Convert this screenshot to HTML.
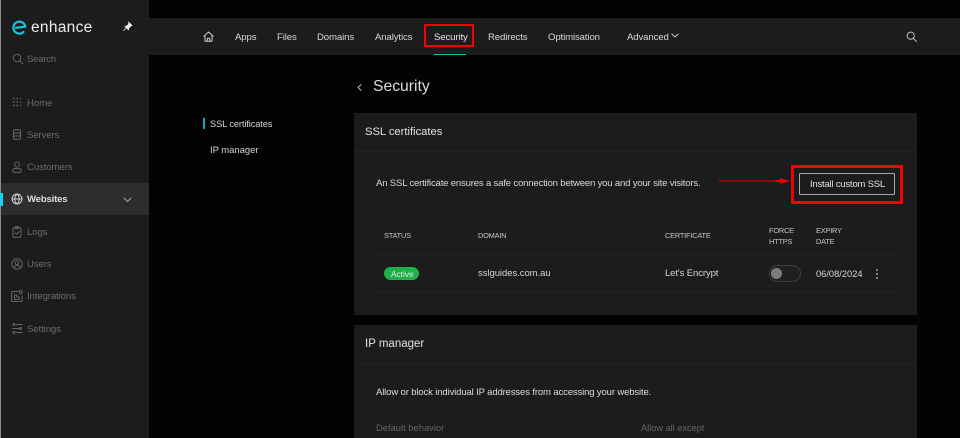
<!DOCTYPE html>
<html><head><meta charset="utf-8"><style>
*{box-sizing:border-box}
html,body{margin:0;padding:0;background:#030303}
body{position:relative;width:960px;height:438px;overflow:hidden;font-family:"Liberation Sans",sans-serif;color:#ddd}
.a{position:absolute}
.t{position:absolute;white-space:nowrap;line-height:14px;height:14px;transform:translateY(-7px)}
.nav{font-size:9.6px;letter-spacing:-.12px;color:#d6d6d6;top:37.5px}
.side{font-size:9.6px;letter-spacing:-.1px;color:#6b6b6b;left:27px}
.h{font-size:7.4px;letter-spacing:-.2px;color:#c4c4c4}
svg{position:absolute;fill:none;stroke-linecap:round;stroke-linejoin:round}
.ic{stroke:#666;stroke-width:1}
</style></head><body>
<div class="a" style="left:0;top:0;width:149px;height:438px;background:#1c1c1c"></div>
<div class="a" style="left:0;top:0;width:1px;height:438px;background:#8a8a8a"></div>
<div class="a" style="left:149px;top:18px;width:811px;height:37px;background:#1c1c1c"></div>

<svg style="left:11px;top:18px" width="16" height="18" viewBox="0 0 16 18" stroke="#16c5e0" stroke-width="2.2"><path d="M12.500 14a6 6 0 1 1 1.800-5.300L5 9.800"/></svg>
<div class="t" style="left:31px;top:27.500px;font-size:15.500px;color:#eee;letter-spacing:.3px">enhance</div>
<svg style="left:122px;top:21px" width="11" height="11" viewBox="0 0 11 11"><path d="M6.500 1l3.500 3.500-1.200.5-2 2-.3 1.800L3 5.300l1.800-.3 2-2zM4.500 6.500L1.500 9.500" style="fill:#eee" stroke="#eee" stroke-width=".8"/></svg>

<svg class="ic" style="left:12px;top:53px" width="12" height="12" viewBox="0 0 12 12"><circle cx="5" cy="5" r="3.800"/><path d="M8 8l3 3"/></svg>
<div class="t side" style="top:59.500px;letter-spacing:-.25px">Search</div>

<svg style="left:12px;top:97px" width="10" height="10" viewBox="0 0 10 10"><g stroke="#666" stroke-width="1.500" stroke-dasharray="1.500 2" stroke-linecap="butt"><path d="M1 1.500h8M1 5h8M1 8.500h8"/></g></svg>
<div class="t side" style="top:103.500px">Home</div>
<svg class="ic" style="left:12px;top:129px" width="10" height="11" viewBox="0 0 10 11"><rect x="1.500" y=".8" width="7" height="9.400" rx="1"/><path d="M1.500 4h7M1.500 7h7"/></svg>
<div class="t side" style="top:135.500px">Servers</div>
<svg class="ic" style="left:11px;top:161px" width="12" height="12" viewBox="0 0 12 12"><circle cx="6" cy="3.500" r="2.500"/><rect x="1.800" y="7.600" width="8.400" height="3.800" rx="1.900"/></svg>
<div class="t side" style="top:167.500px">Customers</div>

<div class="a" style="left:1px;top:183px;width:148px;height:32px;background:#2d2d2d"></div>
<div class="a" style="left:0;top:193px;width:2.500px;height:13px;background:#18d3ee"></div>
<svg style="left:11px;top:193px" width="12" height="12" viewBox="0 0 12 12" stroke="#cfcfcf"><circle cx="6" cy="6" r="5"/><path d="M1 6h10M6 1c-3 3-3 7 0 10M6 1c3 3 3 7 0 10"/></svg>
<div class="t" style="left:27px;top:200px;font-size:9.600px;letter-spacing:-.2px;font-weight:bold;color:#dcdcdc">Websites</div>
<svg style="left:123px;top:197px" width="9" height="6" viewBox="0 0 9 6" stroke="#aaa"><path d="M1 1l3.500 3.500L8 1"/></svg>

<svg class="ic" style="left:12px;top:226px" width="10" height="12" viewBox="0 0 10 12"><rect x="1" y="1.800" width="8" height="9.400" rx="1"/><rect x="3.200" y=".6" width="3.600" height="2" rx=".5"/><path d="M3.200 7l1.300 1.300L7 5.600"/></svg>
<div class="t side" style="top:232.500px">Logs</div>
<svg class="ic" style="left:11px;top:258px" width="12" height="12" viewBox="0 0 12 12"><circle cx="6" cy="6" r="5.200"/><circle cx="6" cy="4.800" r="1.900"/><path d="M2.800 10c.6-2 1.800-2.800 3.200-2.800s2.600.8 3.200 2.800"/></svg>
<div class="t side" style="top:264.500px">Users</div>
<svg class="ic" style="left:11px;top:290px" width="12" height="12" viewBox="0 0 12 12"><path d="M7 1.500H1.500a.8.8 0 0 0-.8.8v8.500a.8.800 0 0 0 .8.8h8.800a.8.800 0 0 0 .8-.8V6"/><rect x="8.500" y=".8" width="2.500" height="2.500"/><path d="M3.500 9.500V5h2.300v2h2.500v2.500z"/></svg>
<div class="t side" style="top:296.500px">Integrations</div>
<svg class="ic" style="left:12px;top:323px" width="11" height="11" viewBox="0 0 11 11"><circle cx="2" cy="1.500" r="1"/><path d="M4.500 1.500h6M.8 5.500h6"/><circle cx="8.500" cy="5.500" r="1"/><circle cx="2" cy="9.500" r="1"/><path d="M4.500 9.500h6"/></svg>
<div class="t side" style="top:329.500px">Settings</div>

<svg style="left:203px;top:31px" width="11" height="11" viewBox="0 0 11 11" stroke="#ccc"><path d="M.8 5.200L5.500 1l4.700 4.200M2 4.500v5.700h7V4.500M4.300 10.200V7.300h2.400v2.900"/></svg>
<div class="t nav" style="left:235px">Apps</div>
<div class="t nav" style="left:277px">Files</div>
<div class="t nav" style="left:317px">Domains</div>
<div class="t nav" style="left:375px">Analytics</div>
<div class="t nav" style="left:434px;color:#e6e6e6">Security</div>
<div class="a" style="left:424px;top:24px;width:50px;height:23px;border:2.500px solid #f00300"></div>
<div class="a" style="left:434px;top:53.500px;width:32px;height:1.500px;background:#12b5d0"></div>
<div class="t nav" style="left:488px">Redirects</div>
<div class="t nav" style="left:548px">Optimisation</div>
<div class="t nav" style="left:627px">Advanced</div>
<svg style="left:671px;top:33px" width="8" height="6" viewBox="0 0 8 6" stroke="#ccc"><path d="M.8 1l3.200 3 3.200-3"/></svg>
<svg style="left:906px;top:31px" width="11" height="11" viewBox="0 0 11 11" stroke="#bbb"><circle cx="4.700" cy="4.700" r="3.600"/><path d="M7.500 7.500l3 3"/></svg>

<svg style="left:357px;top:84px" width="5" height="7" viewBox="0 0 5 7" stroke="#bbb"><path d="M4 .8L1 3.500l3 2.700"/></svg>
<div class="t" style="left:373px;top:87px;font-size:15.700px;color:#dcdcdc">Security</div>

<div class="a" style="left:203px;top:118px;width:2px;height:11px;background:#12a8c4"></div>
<div class="t" style="left:210px;top:124px;font-size:9.300px;letter-spacing:-.12px;color:#d4d4d4">SSL certificates</div>
<div class="t" style="left:210px;top:151px;font-size:9.500px;letter-spacing:-.05px;color:#d4d4d4">IP manager</div>

<div class="a" style="left:354px;top:113px;width:563px;height:202px;background:#1c1c1c"></div>
<div class="a" style="left:354px;top:151px;width:563px;height:1px;background:#232323"></div>
<div class="t" style="left:365px;top:132px;font-size:11.200px;color:#e2e2e2">SSL certificates</div>
<div class="t" style="left:376px;top:184px;font-size:9.600px;letter-spacing:-.2px;color:#d8d8d8">An SSL certificate ensures a safe connection between you and your site visitors.</div>

<svg style="left:718px;top:176px" width="76" height="10" viewBox="0 0 76 10"><path d="M1 5h60" stroke="#e00000" stroke-width="1"/><path d="M63 5h-5" stroke="#e00000" stroke-width="2"/><path d="M62 2l10 3-10 3z" style="fill:#e00000" stroke="none"/></svg>
<div class="a" style="left:791px;top:165px;width:112px;height:39px;border:3px solid #f00300"></div>
<div class="a" style="left:799px;top:173px;width:96px;height:22px;border:1px solid #a8a8a8;border-radius:1.500px"></div>
<div class="t" style="left:810px;top:185px;font-size:9.600px;letter-spacing:-.25px;color:#e0e0e0">Install custom SSL</div>

<div class="t h" style="left:384px;top:236px">STATUS</div>
<div class="t h" style="left:478px;top:236px">DOMAIN</div>
<div class="t h" style="left:665px;top:236px">CERTIFICATE</div>
<div class="t h" style="left:769px;top:230.500px">FORCE</div>
<div class="t h" style="left:769px;top:241.500px">HTTPS</div>
<div class="t h" style="left:816px;top:230.500px">EXPIRY</div>
<div class="t h" style="left:816px;top:241.500px">DATE</div>
<div class="a" style="left:376px;top:254px;width:520px;height:1px;background:#262626"></div>
<div class="a" style="left:376px;top:292px;width:520px;height:1px;background:#262626"></div>

<div class="a" style="left:384px;top:267px;width:35px;height:13px;border-radius:7px;background:#1fb04a"></div>
<div class="t" style="left:391px;top:274px;font-size:8.300px;color:#d8f0df">Active</div>
<div class="t" style="left:478px;top:274px;font-size:9.500px;letter-spacing:-.05px;color:#d4d4d4">sslguides.com.au</div>
<div class="t" style="left:665px;top:274px;font-size:9.500px;letter-spacing:-.1px;color:#d4d4d4">Let's Encrypt</div>
<div class="a" style="left:768.500px;top:265px;width:32.500px;height:17px;border:1px solid #3e3e3e;border-radius:9px;background:#202020"></div>
<div class="a" style="left:771px;top:268px;width:11px;height:11px;border-radius:50%;background:#7c7c7c"></div>
<div class="t" style="left:816px;top:274px;font-size:9.300px;color:#d8d8d8">06/08/2024</div>
<svg style="left:874px;top:268px" width="6" height="12" viewBox="0 0 6 12" stroke="none"><g style="fill:#c4c4c4"><circle cx="3" cy="2" r=".9"/><circle cx="3" cy="6" r=".9"/><circle cx="3" cy="10" r=".9"/></g></svg>

<div class="a" style="left:354px;top:325px;width:563px;height:113px;background:#1c1c1c"></div>
<div class="a" style="left:354px;top:363px;width:563px;height:1px;background:#232323"></div>
<div class="t" style="left:365px;top:344px;font-size:11.500px;color:#e2e2e2">IP manager</div>
<div class="t" style="left:376px;top:393px;font-size:9.500px;letter-spacing:-.13px;color:#dcdcdc">Allow or block individual IP addresses from accessing your website.</div>
<div class="t" style="left:376px;top:428px;font-size:9.400px;color:#666">Default behavior</div>
<div class="t" style="left:641px;top:428px;font-size:9.200px;color:#666">Allow all except</div>
</body></html>
